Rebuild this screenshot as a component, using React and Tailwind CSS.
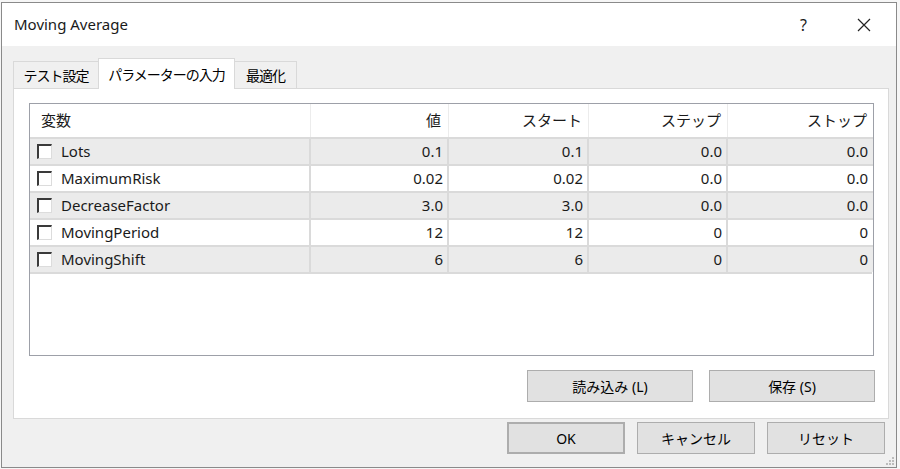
const FONT = { fontFamily: '"Noto Sans", "Noto Sans CJK JP", sans-serif' };

const rows = [
  { name: "Lots", v: "0.1", start: "0.1", step: "0.0", stop: "0.0" },
  { name: "MaximumRisk", v: "0.02", start: "0.02", step: "0.0", stop: "0.0" },
  { name: "DecreaseFactor", v: "3.0", start: "3.0", step: "0.0", stop: "0.0" },
  { name: "MovingPeriod", v: "12", start: "12", step: "0", stop: "0" },
  { name: "MovingShift", v: "6", start: "6", step: "0", stop: "0" },
];

const cols = "grid grid-cols-[281px_138px_140px_139px_1fr]";

function Checkbox() {
  return (
    <span className="inline-block w-[15px] h-[15px] bg-white border-t-2 border-l-2 border-t-[#3a3a3a] border-l-[#3a3a3a] border-r border-b border-r-[#dcdcdc] border-b-[#dcdcdc]" />
  );
}

function Btn({ children, className = "" }) {
  return (
    <button className={"h-[32px] bg-[#e1e1e1] border border-[#adadad] text-[14px] text-black flex items-center justify-center " + className}>
      {children}
    </button>
  );
}

export default function App() {
  return (
    <div className="w-[900px] h-[469px] bg-[#f6f6f6] pt-[2px] pl-[1px]" style={FONT}>
      <div className="w-[896px] h-[466px] border border-[#8a8a8a] bg-[#f0f0f0] flex flex-col">
        {/* title bar */}
        <div className="h-[43px] bg-white flex items-center pl-[12px] text-[15px] text-[#1a1a1a]">
          <span>Moving Average</span>
          <span className="ml-auto mr-[50px] text-[16px]">?</span>
          <svg width="14" height="14" viewBox="0 0 14 14" className="mr-[25px]">
            <path d="M1 1 L13 13 M13 1 L1 13" stroke="#222" strokeWidth="1.2" />
          </svg>
        </div>

        {/* tabs */}
        <div className="flex items-end pl-[11px] pt-[12px] text-[14px] tracking-[-1px] text-black relative z-10">
          <div className="h-[27px] w-[85px] justify-center flex items-center bg-[#f0f0f0] border border-[#d9d9d9] border-b-0 border-r-0">テスト設定</div>
          <div className="h-[31px] w-[137px] justify-center flex items-center bg-white border border-[#d9d9d9] border-b-0 -mb-px">パラメーターの入力</div>
          <div className="h-[27px] w-[62px] justify-center flex items-center bg-[#f0f0f0] border border-[#d9d9d9] border-b-0 border-l-0">最適化</div>
        </div>

        {/* panel */}
        <div className="ml-[11px] w-[876px] h-[331px] bg-white border border-[#d9d9d9] pt-[14px] pl-[15px] flex flex-col">
          <div className="w-[845px] h-[253px] border border-[#9da0a8] text-[15px] text-[#1a1a1a]">
            <div className={cols + " h-[33px] bg-white"}>
              <div className="flex items-center pl-[11px] border-r border-[#ececec]">変数</div>
              <div className="flex items-center justify-end pr-[7px] border-r border-[#ececec]">値</div>
              <div className="flex items-center justify-end pr-[6px] border-r border-[#ececec]">スタート</div>
              <div className="flex items-center justify-end pr-[6px] border-r border-[#ececec]">ステップ</div>
              <div className="flex items-center justify-end pr-[6px]">ストップ</div>
            </div>
            {rows.map((r, i) => (
              <div key={r.name} className={cols + " h-[27px] border-t-2 border-[#dadada] " + (i % 2 === 0 ? "bg-[#ebebeb]" : "bg-white")}>
                <div className="flex items-center pl-[7px] gap-[9px] border-r-2 border-[#dadada]">
                  <Checkbox />
                  <span>{r.name}</span>
                </div>
                <div className="flex items-center justify-end pr-[4px] border-r-2 border-[#dadada]">{r.v}</div>
                <div className="flex items-center justify-end pr-[4px] border-r-2 border-[#dadada]">{r.start}</div>
                <div className="flex items-center justify-end pr-[4px] border-r-2 border-[#dadada]">{r.step}</div>
                <div className="flex items-center justify-end pr-[5px]">{r.stop}</div>
              </div>
            ))}
            <div className="border-t-2 border-[#dadada] mr-[1px]" />
          </div>

          <div className="flex justify-end gap-[16px] mt-[14px] mr-[13px]">
            <Btn className="w-[166px]">読み込み (L)</Btn>
            <Btn className="w-[166px]">保存 (S)</Btn>
          </div>
        </div>

        {/* dialog buttons */}
        <div className="flex justify-end gap-[12px] mt-[3px] mr-[11px] relative">
          <Btn className="w-[118px] border-2 border-[#0078d7]">OK</Btn>
          <Btn className="w-[118px]">キャンセル</Btn>
          <Btn className="w-[118px]">リセット</Btn>
        </div>
        <div className="flex justify-end mr-[1px] mt-auto mb-[1px]">
          <svg width="10" height="10" viewBox="0 0 10 10">
            <g fill="#bcbcbc">
              <rect x="7" y="1" width="2" height="2" />
              <rect x="4" y="4" width="2" height="2" />
              <rect x="7" y="4" width="2" height="2" />
              <rect x="1" y="7" width="2" height="2" />
              <rect x="4" y="7" width="2" height="2" />
              <rect x="7" y="7" width="2" height="2" />
            </g>
          </svg>
        </div>
      </div>
    </div>
  );
}
